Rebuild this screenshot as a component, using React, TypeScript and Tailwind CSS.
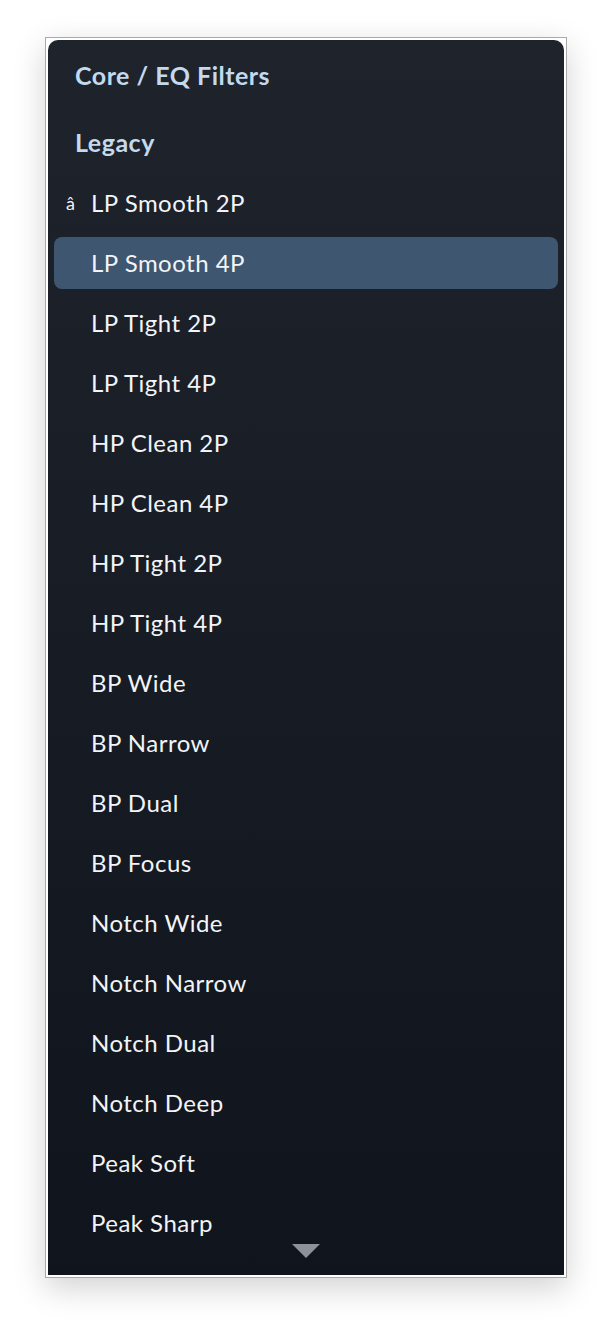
const items = [
  "LP Smooth 2P",
  "LP Smooth 4P",
  "LP Tight 2P",
  "LP Tight 4P",
  "HP Clean 2P",
  "HP Clean 4P",
  "HP Tight 2P",
  "HP Tight 4P",
  "BP Wide",
  "BP Narrow",
  "BP Dual",
  "BP Focus",
  "Notch Wide",
  "Notch Narrow",
  "Notch Dual",
  "Notch Deep",
  "Peak Soft",
  "Peak Sharp",
];

export default function App() {
  return (
    <div className="min-h-screen bg-white pl-[45px] pt-[37px] font-['Lato',sans-serif]">
      <div className="w-[522px] border border-[#a9a9a9] bg-white p-[2px] shadow-[0_10px_30px_rgba(0,0,0,0.18)]">
        <div className="relative h-[1235px] overflow-hidden rounded-t-[10px] bg-gradient-to-b from-[#1f232b] to-[#10151d]">
          <div className="flex h-[72px] items-center pl-[27px] text-[25px] font-bold tracking-[0.02em] text-[#c3d9ee]">
            Core / EQ Filters
          </div>
          <div className="flex h-[61px] items-center pl-[27px] text-[25px] font-bold tracking-[0.02em] text-[#c3d9ee]">
            Legacy
          </div>
          <ul className="flex flex-col gap-[8px] px-[6px] pt-[4px]">
            {items.map((label, i) => (
              <li
                key={label}
                className={
                  "flex h-[52px] items-center rounded-[8px] text-[24px] tracking-[0.02em] text-[#f2f4f7] " +
                  (i === 1 ? "bg-[#3e5670]" : "")
                }
              >
                <span className="w-[37px] pl-[12px] text-[18px]">{i === 0 ? "â" : ""}</span>
                {label}
              </li>
            ))}
          </ul>
          <svg
            className="absolute bottom-[17px] left-[244px]"
            width="28"
            height="14"
            viewBox="0 0 28 14"
          >
            <path d="M0 0h28L14 14z" fill="#8c929a" />
          </svg>
        </div>
      </div>
    </div>
  );
}
